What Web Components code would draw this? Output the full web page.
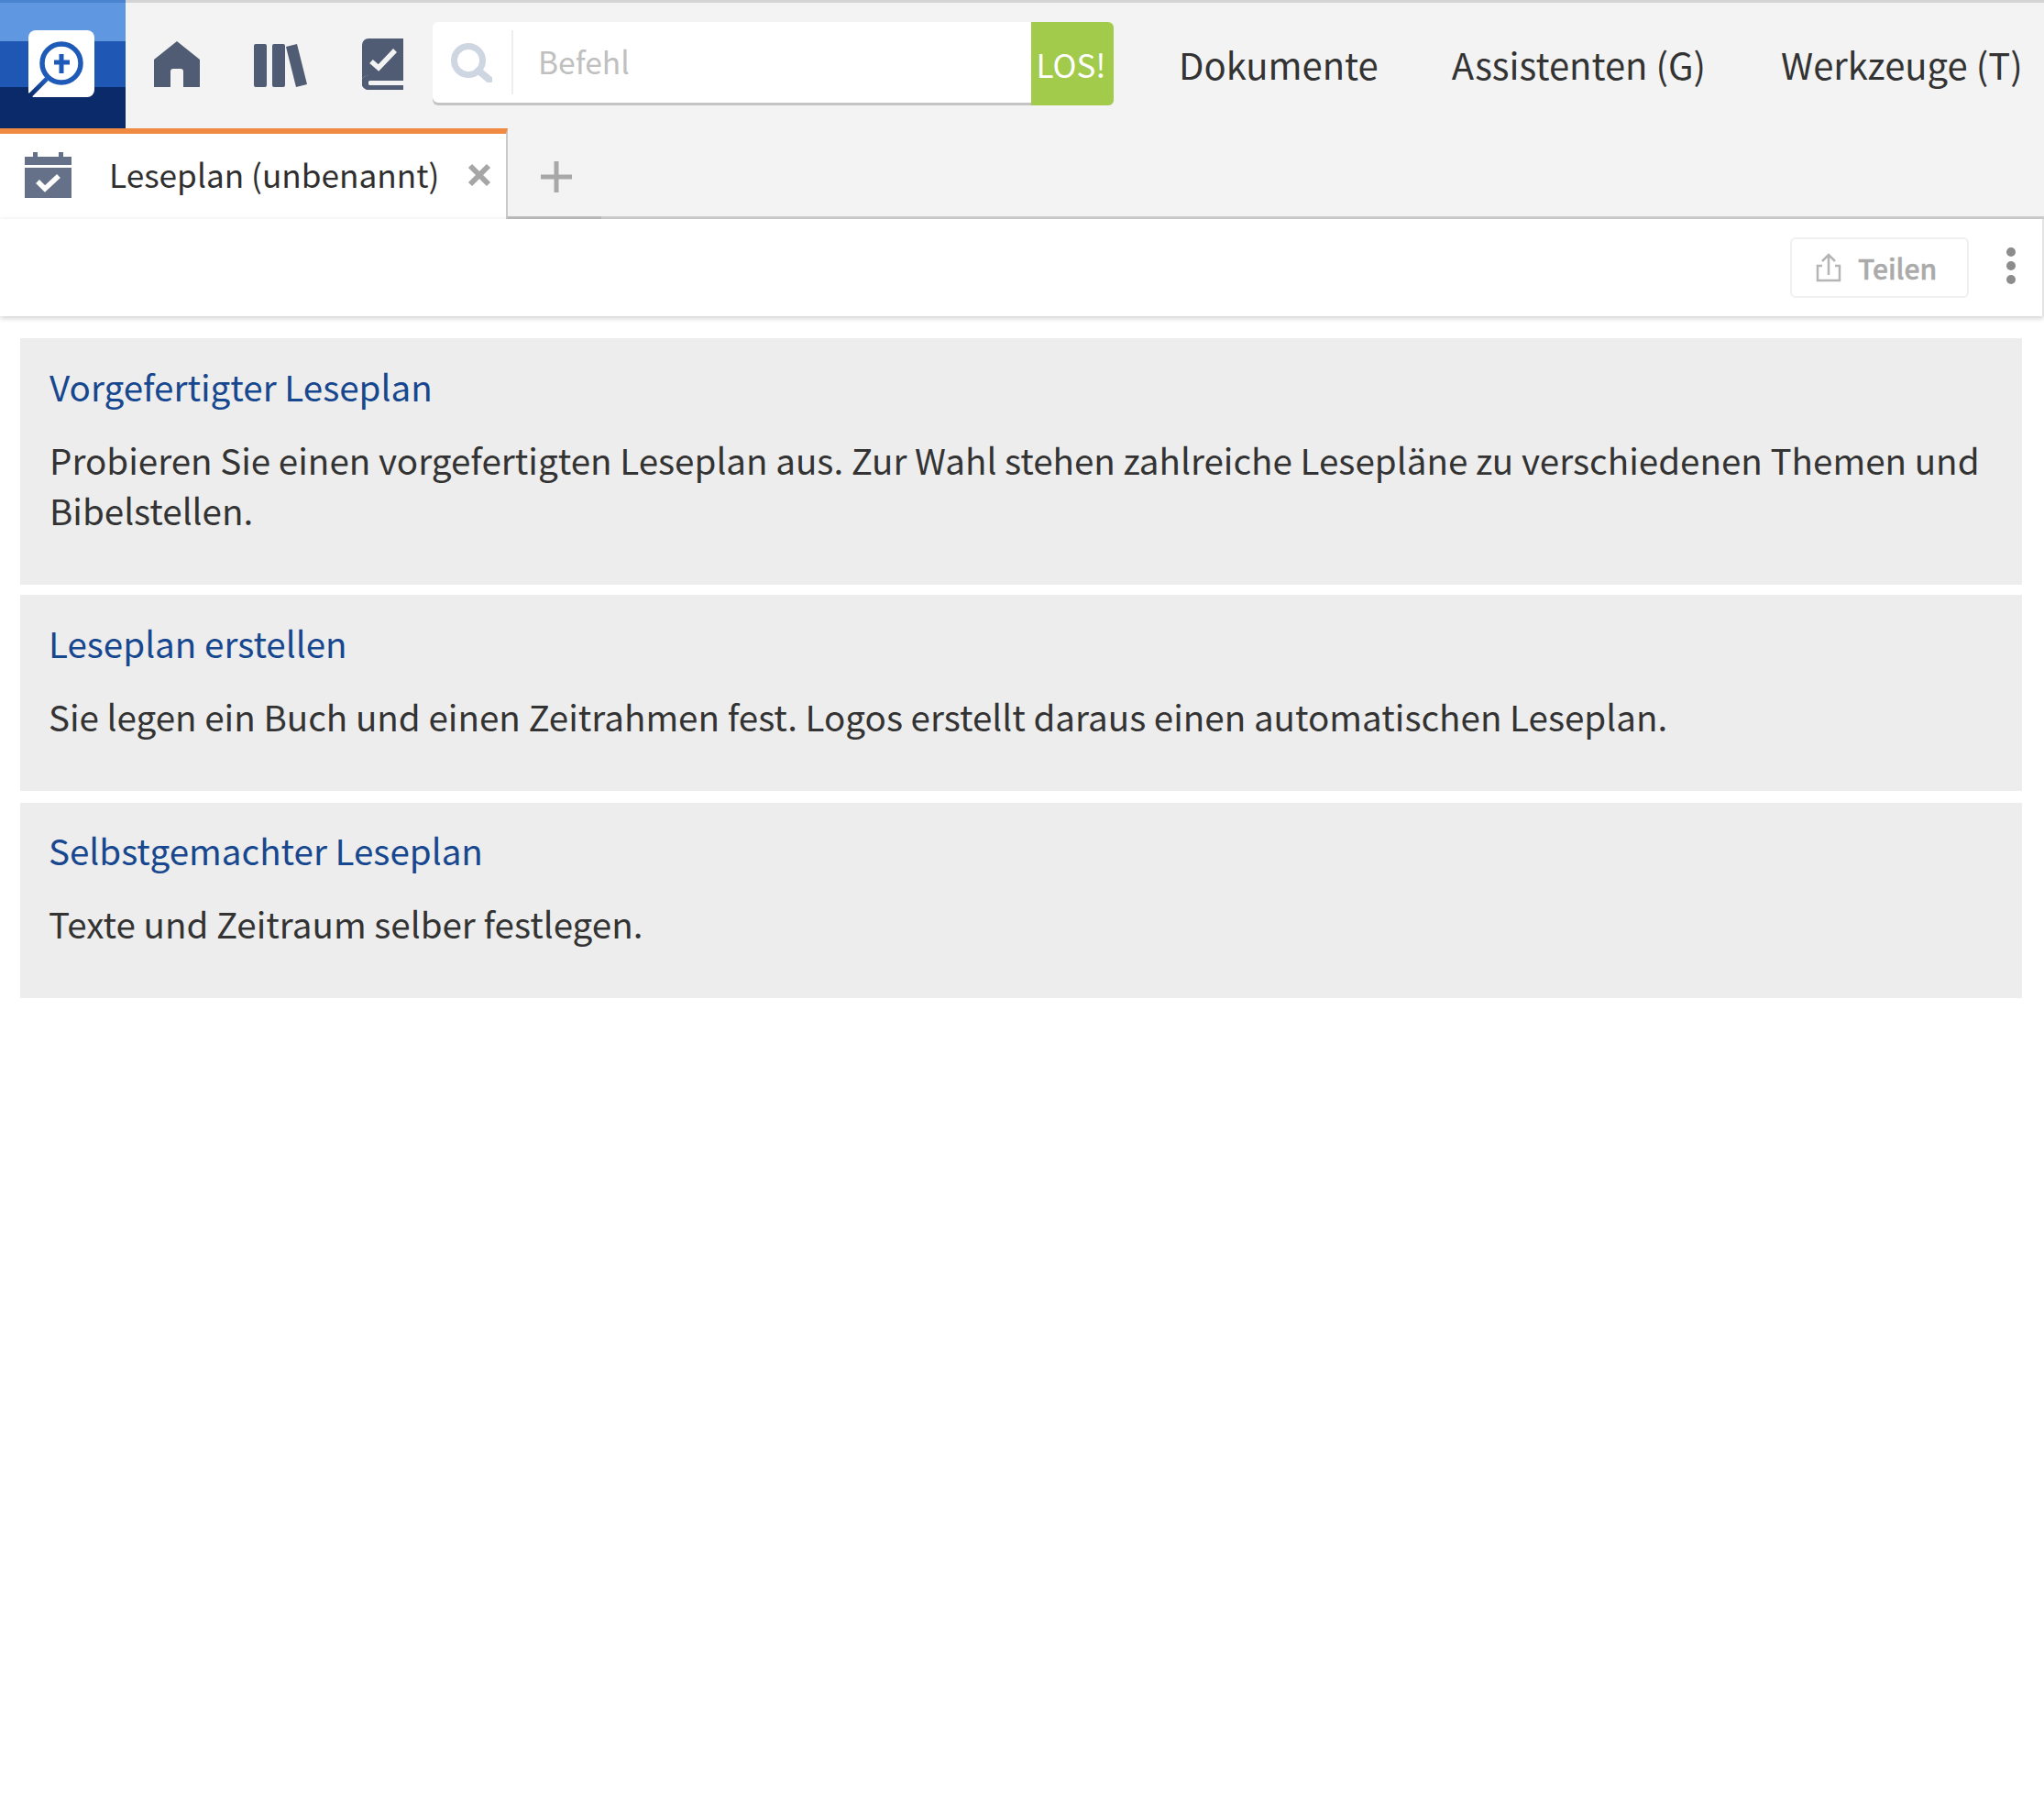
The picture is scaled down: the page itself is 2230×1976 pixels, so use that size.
<!DOCTYPE html>
<html lang="de">
<head>
<meta charset="utf-8">
<title>Leseplan</title>
<style>
  html, body { margin: 0; background: #fff; }
  body { font-family: "Noto Sans CJK SC", "Noto Sans", sans-serif; color: #333; }
</style>
</head>
<body>
<logos-app>
  <top-bar></top-bar>
  <tab-strip label="Leseplan (unbenannt)"></tab-strip>
  <doc-toolbar></doc-toolbar>
  <plan-list>
    <plan-card style="height:269px">
      <span slot="title" style="margin-left:1px">Vorgefertigter Leseplan</span>
      <span style="display:block;margin-left:1px">Probieren Sie einen vorgefertigten Leseplan aus. Zur Wahl stehen zahlreiche Lesepläne zu verschiedenen Themen und Bibelstellen.</span>
    </plan-card>
    <plan-card style="height:214px;margin-top:11px">
      <span slot="title">Leseplan erstellen</span>
      Sie legen ein Buch und einen Zeitrahmen fest. Logos erstellt daraus einen automatischen Leseplan.
    </plan-card>
    <plan-card style="height:213px;margin-top:13px;padding-top:24px">
      <span slot="title">Selbstgemachter Leseplan</span>
      Texte und Zeitraum selber festlegen.
    </plan-card>
  </plan-list>
</logos-app>

<script>
  class LogosApp extends HTMLElement {
    constructor() {
      super()
      this.attachShadow({ mode: "open" })
      this.shadowRoot.innerHTML = `
        <style>
          :host { display: block; width: 2230px; min-height: 1976px; background: #fff; }
        </style>
        <slot></slot>`
    }
  }

  class TopBar extends HTMLElement {
    constructor() {
      super()
      this.attachShadow({ mode: "open" })
      this.shadowRoot.innerHTML = `
        <style>
          :host { display: flex; height: 140px; background: #f3f3f3; box-shadow: inset 0 3px 0 #d4d4d4; align-items: flex-start; }
          svg { display: block; flex: none; }
          .logo { width: 137px; height: 140px; }
          .home { margin: 45px 0 0 31px; }
          .books { margin: 47px 0 0 59px; }
          .book { margin: 42px 0 0 60px; }
          search-box { flex: none; margin: 24px 0 0 32px; }
          nav { display: flex; flex: none; margin: 42px 0 0 71px; font-size: 40px; line-height: 56px; color: #333; white-space: nowrap; }
          nav span + span { margin-left: 80px; }
        </style>
        <svg class="logo" viewBox="0 0 137 140">
          <defs>
            <linearGradient id="handle" x1="50" y1="88" x2="33" y2="104" gradientUnits="userSpaceOnUse">
              <stop offset="0" stop-color="#1e5bb8"/><stop offset="1" stop-color="#0b2a69"/>
            </linearGradient>
          </defs>
          <rect width="137" height="45" fill="#5f98e0"/>
          <rect width="137" height="3" fill="#4a84d0"/>
          <rect y="45" width="137" height="50" fill="#1e58b4"/>
          <rect y="95" width="137" height="45" fill="#0b2a69"/>
          <path d="M39 33H95a8 8 0 0 1 8 8V98a8 8 0 0 1-8 8H36L31 101V41a8 8 0 0 1 8-8Z" fill="#fff"/>
          <circle cx="67" cy="69" r="21" fill="none" stroke="#1e5bb8" stroke-width="5.5"/>
          <path d="M64.500 59h5v21h-5zM59 65.500h17v5H59z" fill="#1e5bb8"/>
          <path d="M51 86L33 104" stroke="url(#handle)" stroke-width="5"/>
        </svg>
        <svg class="home" width="50" height="50" viewBox="0 0 50 50">
          <path d="M25 0L50 20V50H32V33a3 3 0 0 0-3-3H21a3 3 0 0 0-3 3V50H0V20Z" fill="#505c73"/>
        </svg>
        <svg class="books" width="58" height="48" viewBox="0 0 58 48">
          <g fill="#505c73">
            <rect y="1" width="14" height="47" rx="2"/>
            <rect x="20" y="1" width="14" height="47" rx="2"/>
            <path d="M35 4L47 1L58 45L46 48Z"/>
          </g>
        </svg>
        <svg class="book" width="45" height="56" viewBox="0 0 45 56">
          <path d="M7 0H45V41H7a7 7 0 0 0 0 15H45V51H9a2 2 0 0 1 0-5H45V41H7a7 7 0 0 0-7 3V7a7 7 0 0 1 7-7Z" fill="#505c73"/>
          <path d="M0 44V49a7 7 0 0 0 7 7V41a7 7 0 0 0-7 3Z" fill="#505c73"/>
          <path d="M10 25L18 32L36 13" fill="none" stroke="#f3f3f3" stroke-width="5.500"/>
        </svg>
        <search-box></search-box>
        <nav><span>Dokumente</span><span>Assistenten (G)</span><span style="margin-left:82px">Werkzeuge (T)</span></nav>`
    }
  }

  class SearchBox extends HTMLElement {
    constructor() {
      super()
      this.attachShadow({ mode: "open" })
      this.shadowRoot.innerHTML = `
        <style>
          :host { display: flex; width: 743px; height: 91px; background: #fff; border-radius: 6px; box-shadow: inset 0 -3px 0 #c4c4c4; overflow: hidden; }
          svg { flex: none; margin: 23px 0 0 20px; }
          .sep { width: 2px; height: 70px; margin: 9px 0 0 21px; background: #eceef1; }
          .hint { flex: 1; margin-left: 27px; font-size: 33.6px; line-height: 86px; color: #c0c0c0; }
          button { all: unset; box-sizing: border-box; width: 90px; height: 91px; padding-right: 3px; background: #a3cb4b; color: #fff; font: inherit; font-size: 35px; line-height: 91px; text-align: center; }
        </style>
        <svg width="45" height="43" viewBox="0 0 45 43">
          <circle cx="19" cy="19" r="15.500" fill="none" stroke="#ced6e2" stroke-width="7"/>
          <path d="M30 30L42 40" stroke="#ced6e2" stroke-width="7.500" stroke-linecap="round"/>
        </svg>
        <div class="sep"></div>
        <div class="hint">Befehl</div>
        <button>LOS!</button>`
    }
  }

  class TabStrip extends HTMLElement {
    constructor() {
      super()
      this.attachShadow({ mode: "open" })
      this.shadowRoot.innerHTML = `
        <style>
          :host {
            display: flex; height: 99px;
            background:
              linear-gradient(#bdbdbd, #bdbdbd) 554px 96px / 102px 3px no-repeat,
              linear-gradient(#cfcfcf, #cfcfcf) 0 96px / 100% 3px no-repeat,
              #f3f3f3;
          }
          .tab { display: flex; flex: none; align-items: center; width: 554px; height: 99px; padding-bottom: 3px; box-sizing: border-box; background: #fff; border-top: 6px solid #f08a43; border-right: 2px solid #c9c9c9; }
          .cal { flex: none; margin: 0 0 0 27px; }
          .label { margin: -2px 0 0 41px; font-size: 35.2px; line-height: 50px; color: #2f2f2f; white-space: nowrap; }
          .close { flex: none; margin-left: 31px; }
          .add { flex: none; margin: 36px 0 0 36px; }
        </style>
        <div class="tab">
          <svg class="cal" width="51" height="50" viewBox="0 0 51 50">
            <path d="M9 0h5v5h23V0h5v5h9v9H0V5h9ZM0 17H51V50H0Z" fill="#657188"/>
            <path d="M14 32L22 40L37 26" fill="none" stroke="#fff" stroke-width="5.500"/>
          </svg>
          <span class="label"></span>
          <svg class="close" width="26" height="26" viewBox="0 0 26 26">
            <path d="M3 3L23 23M23 3L3 23" stroke="#a6a6a6" stroke-width="6"/>
          </svg>
        </div>
        <svg class="add" width="34" height="34" viewBox="0 0 34 34">
          <path d="M14.500 0h5v14.500H34v5H19.500V34h-5V19.500H0v-5h14.500Z" fill="#a8a8a8"/>
        </svg>`
      this.shadowRoot.querySelector('.label').textContent = this.getAttribute('label')
    }
  }

  class DocToolbar extends HTMLElement {
    constructor() {
      super()
      this.attachShadow({ mode: "open" })
      this.shadowRoot.innerHTML = `
        <style>
          :host { display: flex; justify-content: flex-end; align-items: flex-start; height: 106px; box-sizing: border-box; background: #fff; border-right: 2px solid #e4e4e4; box-shadow: 0 2px 6px rgba(0,0,0,.2); position: relative; }
          .share { display: flex; align-items: center; box-sizing: border-box; width: 195px; height: 66px; margin-top: 20px; border: 2px solid #f0f0f0; border-radius: 6px; color: #aaa; font-size: 30px; font-weight: 500; -webkit-text-stroke: .5px #aaa; }
          .share svg { margin-left: 26px; }
          .share span { margin-left: 18px; }
          .more { margin: 31px 29px 0 41px; }
        </style>
        <div class="share">
          <svg width="28" height="32" viewBox="0 0 28 32">
            <path d="M14 24V2M7 9L14 2L21 9M7 14H2V30H26V14H21" fill="none" stroke="#b5b5b5" stroke-width="2.500"/>
          </svg>
          <span>Teilen</span>
        </div>
        <svg class="more" width="10" height="40" viewBox="0 0 10 40">
          <circle cx="5" cy="5" r="5" fill="#8c8c8c"/><circle cx="5" cy="20" r="5" fill="#8c8c8c"/><circle cx="5" cy="35" r="5" fill="#8c8c8c"/>
        </svg>`
    }
  }

  class PlanList extends HTMLElement {
    constructor() {
      super()
      this.attachShadow({ mode: "open" })
      this.shadowRoot.innerHTML = `
        <style>
          :host { display: flex; flex-direction: column; padding: 24px 24px 0 22px; }
        </style>
        <slot></slot>`
    }
  }

  class PlanCard extends HTMLElement {
    constructor() {
      super()
      this.attachShadow({ mode: "open" })
      this.shadowRoot.innerHTML = `
        <style>
          :host { display: block; box-sizing: border-box; padding: 25px 32px 0 31px; background: #ededed; }
          .title { font-size: 38.6px; line-height: 55px; color: #17478f; }
          .text { margin-top: 25px; font-size: 38.6px; line-height: 55px; color: #333; }
        </style>
        <div class="title"><slot name="title"></slot></div>
        <div class="text"><slot></slot></div>`
    }
  }

  customElements.define('logos-app', LogosApp)
  customElements.define('top-bar', TopBar)
  customElements.define('search-box', SearchBox)
  customElements.define('tab-strip', TabStrip)
  customElements.define('doc-toolbar', DocToolbar)
  customElements.define('plan-list', PlanList)
  customElements.define('plan-card', PlanCard)
</script>
</body>
</html>
